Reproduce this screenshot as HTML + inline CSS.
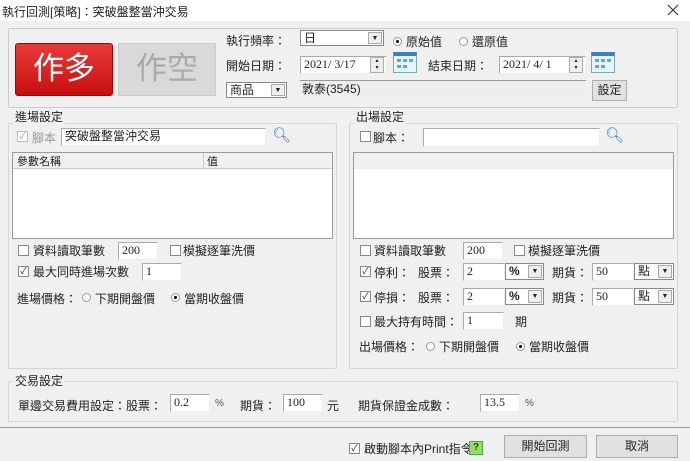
<!DOCTYPE html>
<html><head><meta charset="utf-8"><style>
*{box-sizing:border-box;margin:0;padding:0}
body{width:690px;height:461px;background:#f0f0f0;font-family:"Liberation Sans","Noto Sans CJK TC",sans-serif;font-size:12px;color:#222;position:relative;overflow:hidden}
.a{position:absolute;white-space:nowrap}
.title{left:0;top:0;width:690px;height:21px;background:#fff}
.grp{position:absolute;border:1px solid #d5d5d5;border-radius:2px}
.lg{position:absolute;background:#f0f0f0;padding:0 2px;line-height:14px}
.in{position:absolute;background:#fff;border:1px solid #aaa;border-right-color:#eee;border-bottom-color:#eee;padding-left:3px;line-height:15px;font-size:12px;font-family:"Liberation Serif",serif}
.cb{position:absolute;width:11px;height:11px;border:1px solid #888;background:#fff;font-size:9px;line-height:9px;text-align:center}
.rd{position:absolute;width:9px;height:9px;border-radius:50%;border:1px solid #999;background:#fff}
.rd.on::after{content:"";position:absolute;left:2px;top:2px;width:3px;height:3px;border-radius:50%;background:#000}
.dd{position:absolute;background:#fff;border:1px solid #888;padding-left:3px;line-height:14px}
.dd .ar{position:absolute;right:1px;top:1px;width:14px;bottom:1px;background:#eee;border:1px solid #aaa;font-size:7px;text-align:center;line-height:11px}
.btn{position:absolute;background:#e1e1e1;border:1px solid #adadad;text-align:center}
.cal{position:absolute;width:24px;height:21px;background:#e8f4fb;border:1px solid #7aa;border-top:4px solid #3a7ec4}
.cal i{position:absolute;width:4px;height:3px;background:#4bb}
</style></head><body>
<div class="a title"></div>
<div class="a" style="left:2px;top:3px">執行回測[策略]：突破盤整當沖交易</div>
<svg class="a" style="left:667px;top:4px" width="12" height="12"><path d="M1 1L11 11M11 1L1 11" stroke="#333" stroke-width="1.1"/></svg>

<div class="grp" style="left:8px;top:28px;width:670px;height:80px;border-color:#ccc"></div>
<div class="a" style="left:15px;top:43px;width:98px;height:53px;background:linear-gradient(#e83a3a,#c80f0f);border:1px solid #a00;border-radius:3px;color:#fff;font-size:31px;text-align:center;line-height:50px">作多</div>
<div class="a" style="left:118px;top:43px;width:98px;height:53px;background:#d9d9d9;border:1px solid #ccc;color:#aaa;font-size:31px;text-align:center;line-height:50px">作空</div>
<div class="a" style="left:226px;top:32px">執行頻率：</div>
<div class="dd" style="left:300px;top:30px;width:84px;height:16px">日<span class="ar">▼</span></div>
<div class="rd on" style="left:393px;top:37px"></div><div class="a" style="left:406px;top:33px">原始值</div>
<div class="rd" style="left:459px;top:37px"></div><div class="a" style="left:472px;top:33px">還原值</div>
<div class="a" style="left:226px;top:57px">開始日期：</div>
<div class="in" style="left:300px;top:56px;width:87px;height:18px">2021/ 3/17</div>
<div class="btn" style="left:370px;top:57px;width:14px;height:16px;background:#eee;font-size:6px;line-height:7px">▴<br>▾</div>
<div class="cal" style="left:393px;top:52px"><i style="left:3px;top:3px"></i><i style="left:9px;top:3px"></i><i style="left:15px;top:3px"></i><i style="left:3px;top:9px"></i><i style="left:9px;top:9px"></i></div>
<div class="a" style="left:428px;top:57px">結束日期：</div>
<div class="in" style="left:499px;top:56px;width:87px;height:18px">2021/ 4/ 1</div>
<div class="btn" style="left:569px;top:57px;width:14px;height:16px;background:#eee;font-size:6px;line-height:7px">▴<br>▾</div>
<div class="cal" style="left:591px;top:52px"><i style="left:3px;top:3px"></i><i style="left:9px;top:3px"></i><i style="left:15px;top:3px"></i><i style="left:3px;top:9px"></i><i style="left:9px;top:9px"></i></div>
<div class="dd" style="left:226px;top:82px;width:61px;height:16px">商品<span class="ar">▼</span></div>
<div class="a" style="left:300px;top:80px;width:286px;height:19px;background:#eee;border-top:1px solid #999;padding-left:2px;line-height:17px">敦泰(3545)</div>
<div class="btn" style="left:592px;top:80px;width:35px;height:21px;line-height:19px">設定</div>

<div class="grp" style="left:8px;top:123px;width:329px;height:246px"></div>
<div class="lg" style="left:13px;top:110px">進場設定</div>
<div class="cb" style="left:17px;top:131px;border-color:#bbb;color:#999">✓</div><div class="a" style="left:32px;top:129px;color:#999">腳本</div>
<div class="in" style="left:61px;top:128px;width:205px;height:18px;font-family:inherit">突破盤整當沖交易</div>
<div class="a" style="left:272px;top:126px;font-size:15px;color:#3a7ec4">&#x1F50D;&#xFE0E;</div>
<div class="a" style="left:12px;top:152px;width:321px;height:87px;background:#fff;border:1px solid #999"></div>
<div class="a" style="left:13px;top:153px;width:319px;height:16px;background:#f0f0f0;border-bottom:1px solid #ccc"></div>
<div class="a" style="left:203px;top:153px;width:1px;height:16px;background:#ccc"></div>
<div class="a" style="left:17px;top:153px;font-size:11px">參數名稱</div><div class="a" style="left:207px;top:153px;font-size:11px">值</div>
<div class="cb" style="left:18px;top:245px"></div><div class="a" style="left:33px;top:242px">資料讀取筆數</div>
<div class="in" style="left:118px;top:242px;width:40px;height:18px">200</div>
<div class="cb" style="left:170px;top:245px"></div><div class="a" style="left:183px;top:242px">模擬逐筆洗價</div>
<div class="cb" style="left:18px;top:266px">✓</div><div class="a" style="left:33px;top:263px">最大同時進場次數</div>
<div class="in" style="left:142px;top:263px;width:40px;height:18px">1</div>
<div class="a" style="left:17px;top:290px">進場價格：</div>
<div class="rd" style="left:82px;top:293px"></div><div class="a" style="left:95px;top:290px">下期開盤價</div>
<div class="rd on" style="left:171px;top:293px"></div><div class="a" style="left:184px;top:290px">當期收盤價</div>

<div class="grp" style="left:349px;top:123px;width:329px;height:246px"></div>
<div class="lg" style="left:354px;top:110px">出場設定</div>
<div class="cb" style="left:360px;top:131px"></div><div class="a" style="left:373px;top:129px">腳本：</div>
<div class="in" style="left:423px;top:128px;width:177px;height:19px"></div>
<div class="a" style="left:605px;top:126px;font-size:15px;color:#3a7ec4">&#x1F50D;&#xFE0E;</div>
<div class="a" style="left:353px;top:152px;width:321px;height:87px;background:#fff;border:1px solid #999"></div>
<div class="a" style="left:354px;top:153px;width:319px;height:16px;background:#f0f0f0"></div>
<div class="cb" style="left:360px;top:245px"></div><div class="a" style="left:374px;top:242px">資料讀取筆數</div>
<div class="in" style="left:463px;top:242px;width:40px;height:18px">200</div>
<div class="cb" style="left:514px;top:245px"></div><div class="a" style="left:528px;top:242px">模擬逐筆洗價</div>
<div class="cb" style="left:360px;top:266px">✓</div><div class="a" style="left:374px;top:264px">停利：</div><div class="a" style="left:418px;top:264px">股票：</div>
<div class="in" style="left:463px;top:263px;width:42px;height:18px">2</div>
<div class="dd" style="left:505px;top:263px;width:39px;height:17px;font-weight:bold">%<span class="ar">▼</span></div>
<div class="a" style="left:552px;top:264px">期貨：</div>
<div class="in" style="left:592px;top:263px;width:42px;height:18px">50</div>
<div class="dd" style="left:634px;top:263px;width:40px;height:17px">點<span class="ar">▼</span></div>
<div class="cb" style="left:360px;top:291px">✓</div><div class="a" style="left:374px;top:289px">停損：</div><div class="a" style="left:418px;top:289px">股票：</div>
<div class="in" style="left:463px;top:288px;width:42px;height:18px">2</div>
<div class="dd" style="left:505px;top:288px;width:39px;height:17px;font-weight:bold">%<span class="ar">▼</span></div>
<div class="a" style="left:552px;top:289px">期貨：</div>
<div class="in" style="left:592px;top:288px;width:42px;height:18px">50</div>
<div class="dd" style="left:634px;top:288px;width:40px;height:17px">點<span class="ar">▼</span></div>
<div class="cb" style="left:360px;top:316px"></div><div class="a" style="left:374px;top:313px">最大持有時間：</div>
<div class="in" style="left:463px;top:312px;width:41px;height:18px">1</div><div class="a" style="left:515px;top:313px">期</div>
<div class="a" style="left:359px;top:338px">出場價格：</div>
<div class="rd" style="left:426px;top:342px"></div><div class="a" style="left:439px;top:338px">下期開盤價</div>
<div class="rd on" style="left:516px;top:342px"></div><div class="a" style="left:529px;top:338px">當期收盤價</div>

<div class="grp" style="left:8px;top:381px;width:670px;height:41px"></div>
<div class="lg" style="left:13px;top:374px">交易設定</div>
<div class="a" style="left:18px;top:397px">單邊交易費用設定：股票：</div>
<div class="in" style="left:170px;top:394px;width:40px;height:18px">0.2</div><div class="a" style="left:215px;top:398px;font-size:10px;color:#555">%</div>
<div class="a" style="left:240px;top:397px">期貨：</div>
<div class="in" style="left:283px;top:394px;width:40px;height:18px">100</div><div class="a" style="left:327px;top:397px">元</div>
<div class="a" style="left:358px;top:397px">期貨保證金成數：</div>
<div class="in" style="left:480px;top:394px;width:40px;height:18px">13.5</div><div class="a" style="left:525px;top:398px;font-size:10px;color:#555">%</div>

<div class="a" style="left:0;top:427px;width:690px;height:1px;background:#999"></div>
<div class="cb" style="left:349px;top:443px">✓</div><div class="a" style="left:364px;top:440px">啟動腳本內Print指令</div>
<div class="a" style="left:469px;top:441px;width:14px;height:14px;background:#9d6;border:1px solid #4a4;color:#060;font-size:10px;text-align:center;line-height:12px;font-weight:bold">?</div>
<div class="btn" style="left:504px;top:435px;width:83px;height:23px;line-height:21px">開始回測</div>
<div class="btn" style="left:596px;top:435px;width:82px;height:23px;line-height:21px">取消</div>
</body></html>
